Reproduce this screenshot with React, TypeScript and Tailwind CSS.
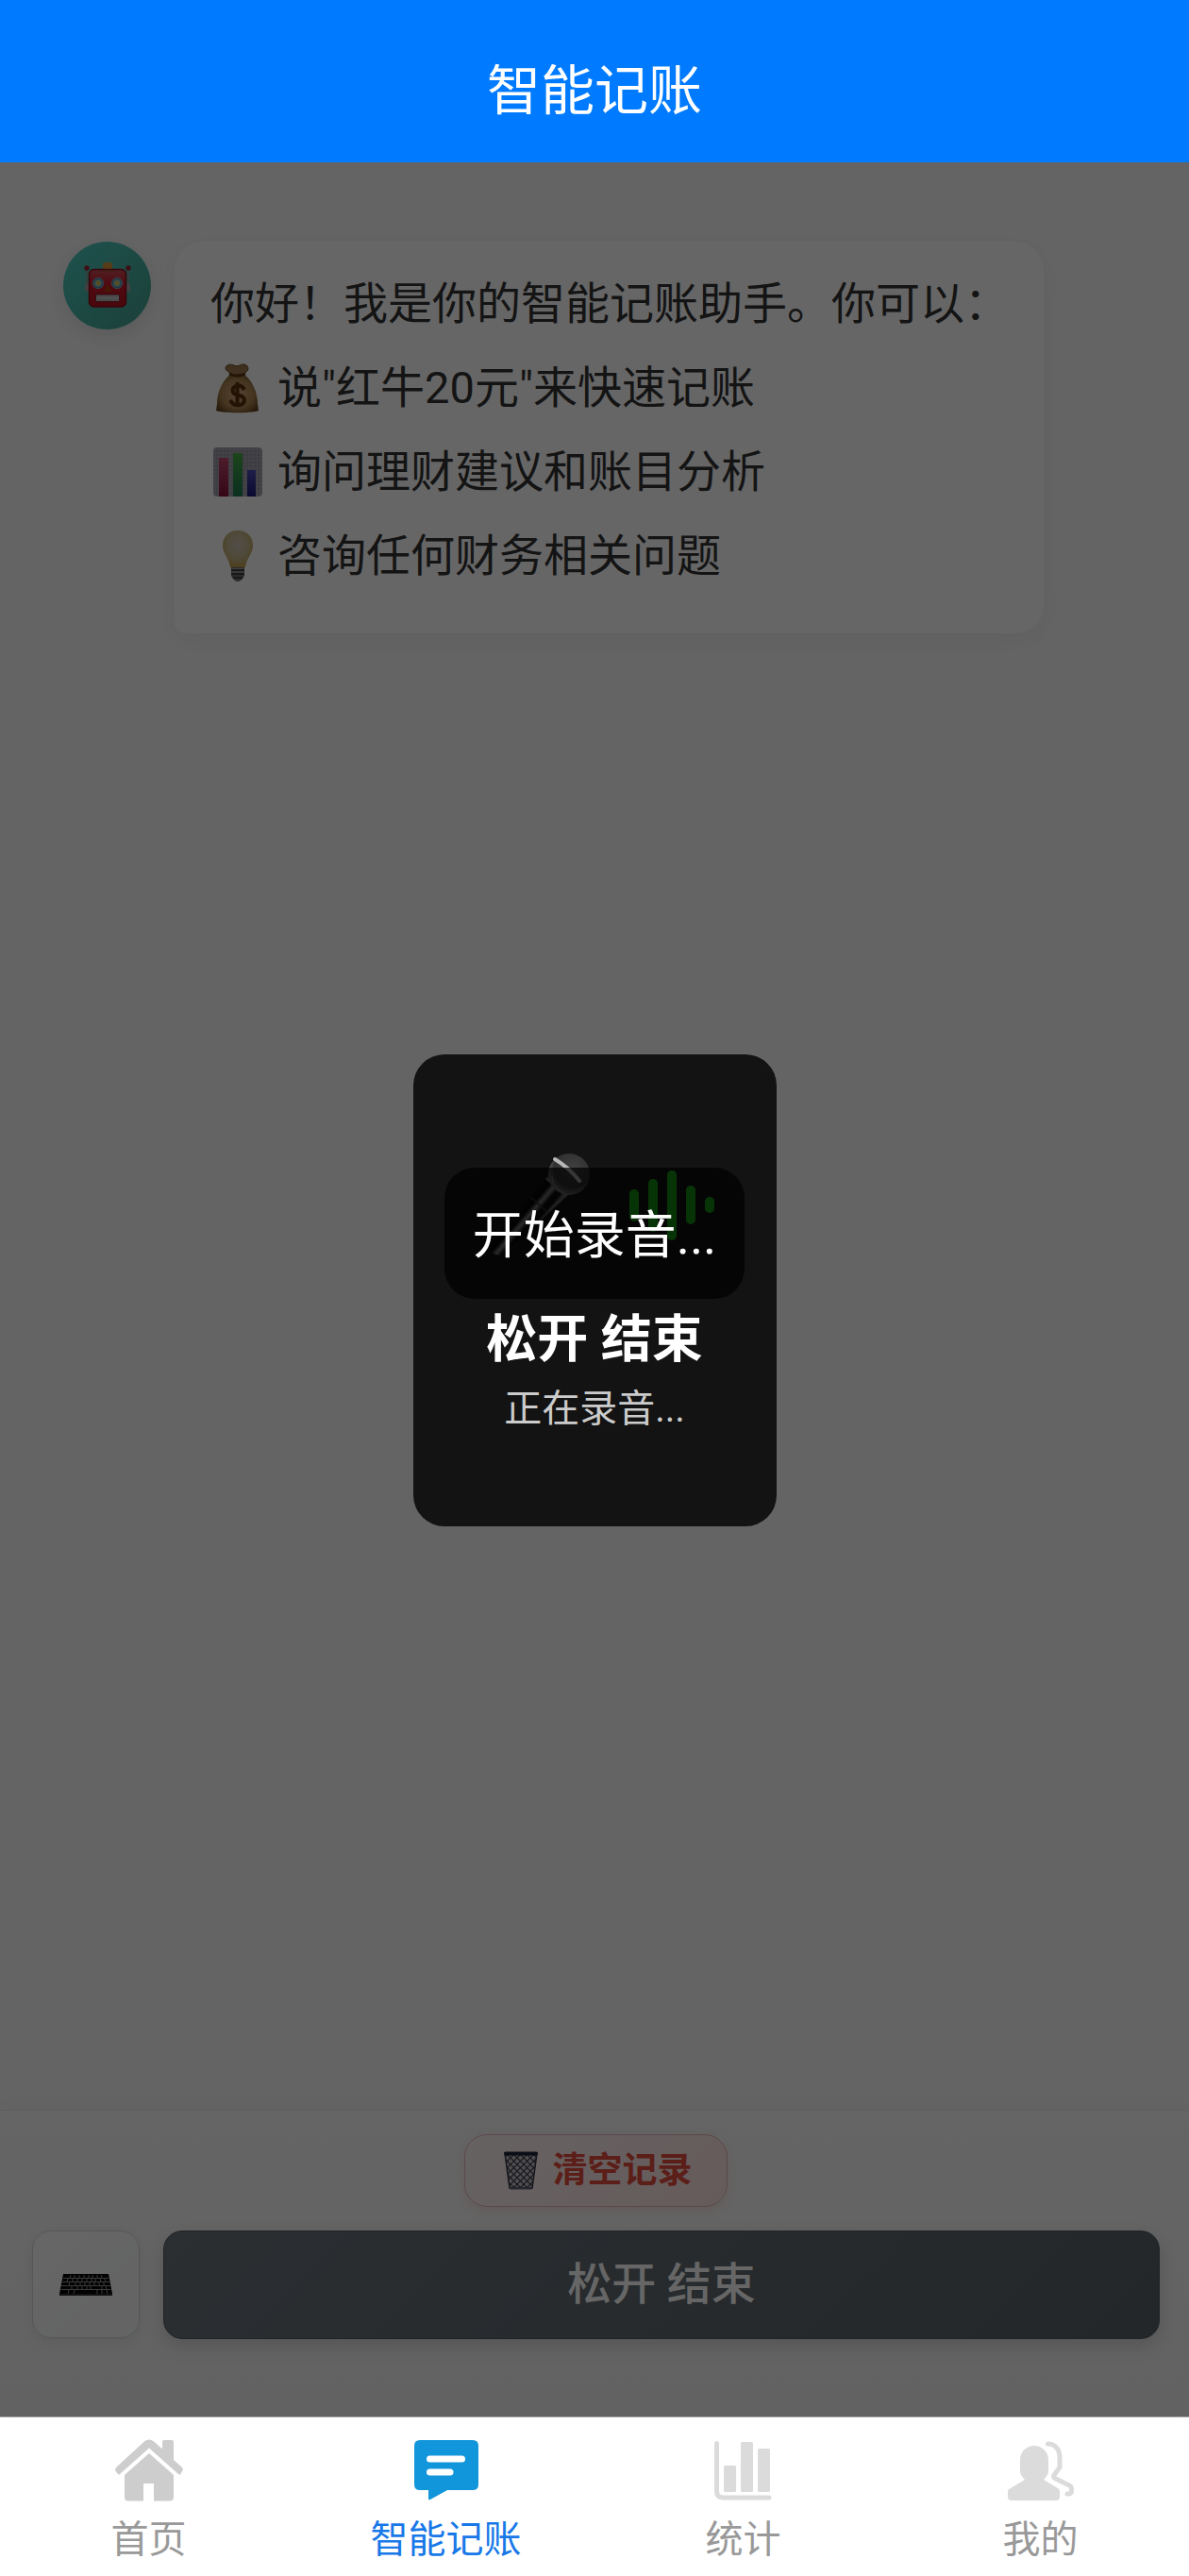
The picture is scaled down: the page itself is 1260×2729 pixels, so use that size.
import type { ReactNode } from "react";

function RobotIcon() {
  return (
    <svg viewBox="0 0 50 50" className="h-[50px] w-[50px]" aria-hidden="true">
      <defs>
        <linearGradient id="robot-face" x1="0" y1="0" x2="0" y2="1">
          <stop offset="0" stopColor="#c8525c" />
          <stop offset="0.35" stopColor="#c81c2c" />
          <stop offset="1" stopColor="#b81222" />
        </linearGradient>
      </defs>
      <path d="M3 7v16M47 7v16" stroke="#8a9a9a" strokeWidth="1.5" />
      <rect x="1" y="22" width="5" height="9" rx="2" fill="#a9a0a2" />
      <rect x="44" y="22" width="5" height="9" rx="2" fill="#a9a0a2" />
      <circle cx="3" cy="6" r="2.7" fill="#9c2432" />
      <circle cx="47" cy="6" r="2.7" fill="#9c2432" />
      <rect x="20" y="0" width="10" height="9" rx="2.5" fill="#d8983c" />
      <rect x="5.5" y="7.5" width="39" height="39.5" rx="5" fill="url(#robot-face)" stroke="#8d0c18" strokeWidth="1.5" />
      <path d="M15 9.500q10-4 20 0z" fill="#9c4a36" />
      {[15, 35].map((x) => (
        <g key={x}>
          <circle cx={x} cy="22" r="5.8" fill="#4389ac" stroke="#9a9cac" strokeWidth="1" />
          <circle cx={x} cy="22" r="3.8" fill="#9fc0b0" />
          <circle cx={x} cy="22" r="2.2" fill="#d8c44c" />
        </g>
      ))}
      <path d="M25 23l4.500 8h-9z" fill="#b33a12" />
      <rect x="12.5" y="34" width="25" height="7.5" rx="1" fill="#b8b8b8" stroke="#6b1620" strokeWidth="0.8" />
      <path d="M13 37.700h24" stroke="#d8d8d8" strokeWidth="1" />
    </svg>
  );
}

function MoneyBagIcon() {
  return (
    <svg viewBox="0 0 54 54" className="h-[54px] w-[54px]" aria-hidden="true">
      <defs>
        <radialGradient id="bag" cx="0.5" cy="0.5" r="0.6">
          <stop offset="0" stopColor="#d0a878" />
          <stop offset="0.65" stopColor="#a88250" />
          <stop offset="1" stopColor="#64441c" />
        </radialGradient>
      </defs>
      <path d="M14 6c1-5 6-4 9-3 2 1 4 1 6 0 4-2 9-1 9 4 0 2-4 4-5 7H20c-1-4-6-5-6-8z" fill="#9c774c" stroke="#6b4a20" strokeWidth="1" />
      <path d="M19 13h15C43 20 48 32 48 44l1 7c-6 3-39 3-45 0l1-7c0-12 5-24 14-31z" fill="url(#bag)" />
      <path d="M18 12q8 4 17 0" stroke="#58340d" strokeWidth="3" fill="none" />
      <path d="M34 29c-2-4-5-5-8-4-6 1-6 8 0 9l3 1c7 2 6 9 0 10-4 1-8-1-10-5M26.500 21v26" stroke="#58300c" strokeWidth="4" fill="none" />
    </svg>
  );
}

function BarChartIcon() {
  return (
    <svg viewBox="0 0 54 54" className="h-[54px] w-[54px]" aria-hidden="true">
      <rect x="1" y="1" width="52" height="52" rx="4" fill="#a8a8b6" />
      <path
        d="M5 1v52M9 1v52M13 1v52M17 1v52M21 1v52M25 1v52M29 1v52M33 1v52M37 1v52M41 1v52M45 1v52M49 1v52M1 5h52M1 9h52M1 13h52M1 17h52M1 21h52M1 25h52M1 29h52M1 33h52M1 37h52M1 41h52M1 45h52M1 49h52"
        stroke="#90909b"
        strokeWidth="0.8"
      />
      <linearGradient id="bar-r" x1="0" y1="0" x2="0" y2="1">
        <stop offset="0" stopColor="#c0486e" />
        <stop offset="1" stopColor="#841238" />
      </linearGradient>
      <linearGradient id="bar-g" x1="0" y1="0" x2="0" y2="1">
        <stop offset="0" stopColor="#46ac46" />
        <stop offset="1" stopColor="#1c7850" />
      </linearGradient>
      <linearGradient id="bar-b" x1="0" y1="0" x2="0" y2="1">
        <stop offset="0" stopColor="#4c4cb4" />
        <stop offset="1" stopColor="#161678" />
      </linearGradient>
      <rect x="7" y="12" width="10" height="41" fill="url(#bar-r)" />
      <rect x="22" y="7" width="10" height="46" fill="url(#bar-g)" />
      <rect x="37" y="25" width="9" height="28" fill="url(#bar-b)" />
    </svg>
  );
}

function BulbIcon() {
  return (
    <svg viewBox="0 0 54 54" className="h-[54px] w-[54px]" aria-hidden="true">
      <defs>
        <radialGradient id="bulb" cx="0.5" cy="0.4" r="0.6">
          <stop offset="0" stopColor="#ccc4b8" />
          <stop offset="0.6" stopColor="#c4b68c" />
          <stop offset="1" stopColor="#c4a04c" />
        </radialGradient>
      </defs>
      <path d="M27 0C17 0 11 7 11 16c0 9 7 13 8 23h16c1-10 8-14 8-23C43 7 37 0 27 0z" fill="url(#bulb)" />
      <path d="M20 39h14v9q-3 6-7 6t-7-6z" fill="#6c6c6c" />
      <path d="M20 42h14M20 46h14M22 50h10" stroke="#2f2f2f" strokeWidth="1.5" />
      <path d="M21 40.500h12M21 44h12" stroke="#aaa" strokeWidth="1" />
    </svg>
  );
}

function MicIcon() {
  return (
    <svg viewBox="-11 0 123 112" className="h-[112px] w-[123px]" aria-hidden="true">
      <defs>
        <linearGradient id="mic-body" gradientUnits="userSpaceOnUse" x1="32" y1="58" x2="54" y2="77">
          <stop offset="0" stopColor="#6a6a6a" />
          <stop offset="0.12" stopColor="#0c0c0c" />
          <stop offset="0.38" stopColor="#060606" />
          <stop offset="0.55" stopColor="#8c8c8c" />
          <stop offset="0.72" stopColor="#0c0c0c" />
          <stop offset="0.9" stopColor="#0c0c0c" />
          <stop offset="1" stopColor="#6a6a6a" />
        </linearGradient>
        <radialGradient id="mic-head" cx="0.6" cy="0.35" r="0.65">
          <stop offset="0" stopColor="#404040" />
          <stop offset="0.7" stopColor="#303030" />
          <stop offset="1" stopColor="#686868" />
        </radialGradient>
      </defs>
      <path d="M64 27L86 46L16 110Q5 108 1 97z" fill="url(#mic-body)" />
      <path d="M64 27L86 46" stroke="#6a6a6a" strokeWidth="3" />
      <path d="M47 47L66 64" stroke="#333" strokeWidth="1.5" />
      <circle cx="88" cy="23" r="22" fill="url(#mic-head)" />
      <path d="M70 25q0 13 16 20" stroke="#777" strokeWidth="1.5" fill="none" />
      <path d="M73 7Q88 16 99 30" stroke="#b8b8b8" strokeWidth="4" fill="none" strokeLinecap="round" />
    </svg>
  );
}

function TrashIcon() {
  return (
    <svg viewBox="0 0 36 41" className="h-[41px] w-9" aria-hidden="true">
      <defs>
        <pattern id="mesh" width="7" height="7" patternUnits="userSpaceOnUse">
          <path d="M0 0l7 7M7 0L0 7" stroke="#2c3040" strokeWidth="1.1" />
        </pattern>
      </defs>
      <path d="M1 2h34l-5 37H6z" fill="#c8c0c6" />
      <path d="M1 2h34l-5 37H6z" fill="url(#mesh)" stroke="#343846" strokeWidth="1.5" />
      <path d="M2 2.500h32" stroke="#20243a" strokeWidth="4" strokeLinecap="round" />
      <path d="M7 39.500h22" stroke="#626680" strokeWidth="2" strokeLinecap="round" />
    </svg>
  );
}

function KeyboardIcon() {
  return (
    <svg viewBox="0 0 56 23" className="h-[23px] w-14" aria-hidden="true">
      <path d="M4 0h48l4 21v2H0v-2z" fill="#060606" />
      <path
        d="M4 4.500h48M3 8.500h50M2 12.500h52M1.500 16.500h53M12 1l-1 3M16 1v3M21 1v3M26 1v3M31 1v3M35 1v3M40 1v3M44 1l1 3M9 5l-1 3M14 5v3M19 5v3M24 5v3M29 5v3M34 5v3M38 5v3M43 5l1 3M48 5l1 3M11 9l-1 3M17 9v3M22 9v3M27 9v3M32 9v3M37 9v3M42 9v3M47 9v3M13 13v3M19 13v3M24 13v3M29 13v3M33 13v3M45 13v3M49 13l1 3M10 17l-1 4M16 17l-1 4M40 17v4M45 17v4M50 17l1 4"
        stroke="#909090"
        strokeWidth="1"
        fill="none"
      />
      <path d="M0 22h56" stroke="#555" strokeWidth="1" />
    </svg>
  );
}

function HomeIcon() {
  return (
    <svg viewBox="0 0 72 66" className="h-[66px] w-[72px] fill-[#cdcdcd]" aria-hidden="true">
      <path d="M31.500 2Q36 -1 40.500 2L50 10.500V3q0-2 2-2h8q2 0 2 2v19l9.500 8.500Q72 32 71.500 33l-2 4Q68.500 38 67 37L36 9.500L5 37Q4 38 3 37L0.500 34Q-0.500 32 1 30z" />
      <path d="M36 15L62 38v23.500q0 4-4 4H41V47H30v18.500H14q-4 0-4-4V38z" />
    </svg>
  );
}

function ChatIcon() {
  return (
    <svg viewBox="0 0 68 64" className="h-16 w-[68px]" aria-hidden="true">
      <path d="M6 0h56q6 0 6 6v41q0 6-6 6H35L17 63q-2 1-2-1v-9H6q-6 0-6-6V6q0-6 6-6z" fill="#1296db" />
      <path d="M16.500 20h34M16.500 34h21.500" stroke="white" strokeWidth="7" strokeLinecap="round" />
    </svg>
  );
}

function StatsIcon() {
  return (
    <svg viewBox="0 0 61 63" className="h-[63px] w-[61px] fill-[#dbdbdb]" aria-hidden="true">
      <path d="M2.500 2.500V53q0 7 7 7H58" fill="none" stroke="#dbdbdb" strokeWidth="5" strokeLinecap="round" />
      <rect x="10" y="26" width="13" height="28" rx="1.5" />
      <rect x="28" y="1" width="13" height="53" rx="1.5" />
      <rect x="46" y="8" width="13" height="46" rx="1.5" />
    </svg>
  );
}

function PeopleIcon() {
  return (
    <svg viewBox="0 0 70 63" className="h-[63px] w-[70px]" aria-hidden="true">
      <path d="M28 5C37 5 43 12 43 20V32Q43 36 38 41L53 50Q55 51 55 53V59Q55 63 51 63H4Q0 63 0 59V53Q0 51 3 50L18 41Q13 36 13 32V20C13 12 19 5 28 5z" fill="#dbdbdb" />
      <path d="M42.500 3C50 3 55 9 55 17V28L49 36Q48 38.500 50 39.500L65 47Q67.500 48 67.500 51V53Q67.500 56.500 63 56" fill="none" stroke="#dbdbdb" strokeWidth="5" strokeLinecap="round" />
    </svg>
  );
}

function Tip({ icon, children }: { icon: ReactNode; children: ReactNode }) {
  return (
    <li className="flex items-center gap-[13px]">
      <span className="flex w-[58px] justify-center">{icon}</span>
      <span>{children}</span>
    </li>
  );
}

function Tab({ icon, label, active = false }: { icon: ReactNode; label: string; active?: boolean }) {
  return (
    <a
      href="#"
      aria-current={active ? "page" : undefined}
      className={`flex flex-1 flex-col items-center pt-5 text-[40px] leading-[60px] ${active ? "text-[#1878e8]" : "text-[#999999]"}`}
    >
      <span className="flex h-[72px] items-center">{icon}</span>
      <span className="mt-2">{label}</span>
    </a>
  );
}

const bars = ["h-[34px]", "h-14", "h-[74px]", "h-[41px]", "h-[17px]"];

export default function App() {
  return (
    <div className="flex min-h-screen flex-col bg-[#fafafa] font-[Roboto,'Noto_Sans_CJK_SC',sans-serif]">
      <header className="flex h-[172px] items-end justify-center bg-[#007aff] pb-[31px]">
        <h1 className="text-[57px] leading-[88px] text-white">智能记账</h1>
      </header>

      <main className="relative flex flex-1 flex-col">
        <section className="flex flex-1 items-start gap-[25px] px-[67px] pt-[84px]">
          <div className="flex h-[93px] w-[93px] shrink-0 items-center justify-center rounded-full bg-linear-135 from-[#4ecdc4] to-[#44a08d] shadow-[0_7px_20px_rgba(0,0,0,0.1)]">
            <RobotIcon />
          </div>
          <div className="w-[921px] rounded-[30px] rounded-bl-[10px] bg-white pt-[21px] pr-6 pb-[38px] pl-[38px] text-[47px] leading-[89px] text-[#333333] shadow-[0_7px_26px_rgba(0,0,0,0.05)]">
            <p>你好！我是你的智能记账助手。你可以：</p>
            <ul>
              <Tip icon={<MoneyBagIcon />}>说"红牛20元"来快速记账</Tip>
              <Tip icon={<BarChartIcon />}>询问理财建议和账目分析</Tip>
              <Tip icon={<BulbIcon />}>咨询任何财务相关问题</Tip>
            </ul>
          </div>
        </section>

        <section className="border-t border-[#e9ecef] bg-linear-to-b from-[#fcfcfc] to-[#f6f6f6] pr-[31px] pb-[82px] pl-[34px] shadow-[0_-7px_26px_rgba(0,0,0,0.03)]">
          <div className="flex justify-center pt-[25px]">
            <button
              type="button"
              className="flex h-[77px] w-[279px] items-center justify-center gap-4 rounded-3xl border border-[#e4b4b8] bg-linear-135 from-[#fff5f5] to-[#ffe3e3] pl-1 text-[37px] font-bold text-[#e74c3c] shadow-[0_4px_14px_rgba(231,76,60,0.15)]"
            >
              <TrashIcon />
              清空记录
            </button>
          </div>
          <div className="mt-[25px] flex gap-[25px]">
            <button
              type="button"
              aria-label="键盘输入"
              className="flex h-[114px] w-[114px] shrink-0 items-center justify-center rounded-[20px] border border-[#d5d8da] bg-linear-135 from-white to-[#f8f9fa] shadow-[0_4px_14px_rgba(0,0,0,0.08)]"
            >
              <KeyboardIcon />
            </button>
            <button
              type="button"
              className="h-[115px] flex-1 rounded-[20px] border border-[#51585e] bg-linear-135 from-[#6c757d] to-[#5a6268] text-[47px] font-medium text-white shadow-[0_7px_20px_rgba(0,0,0,0.15)]"
            >
              松开 结束
            </button>
          </div>
        </section>

        <div className="absolute inset-0 bg-black/60" />
      </main>

      <nav className="flex h-[169px] border-t border-[#a5a5a5] bg-white">
        <Tab icon={<HomeIcon />} label="首页" />
        <Tab icon={<ChatIcon />} label="智能记账" active />
        <Tab icon={<StatsIcon />} label="统计" />
        <Tab icon={<PeopleIcon />} label="我的" />
      </nav>

      <div className="pointer-events-none fixed inset-0 flex items-center justify-center pt-1">
        <div role="dialog" aria-label="录音" className="flex h-[500px] w-[385px] flex-col items-center rounded-[33px] bg-[#131313] pt-[104px] text-white">
          <div className="flex items-center gap-10">
            <MicIcon />
            <div className="flex items-center gap-[10px]">
              {bars.map((h) => (
                <span key={h} className={`w-[10px] rounded-[5px] bg-[#1aad19] ${h}`} />
              ))}
            </div>
          </div>
          <p className="mt-[47px] text-[54px] leading-[80px] font-bold">松开 结束</p>
          <p className="text-[40px] leading-[66px] text-[#cccccc]">正在录音...</p>
        </div>
      </div>

      <div className="pointer-events-none fixed inset-0 flex items-center justify-center pb-[116px]">
        <p role="status" className="flex h-[139px] items-center rounded-[32px] bg-black/70 px-[30px] pt-1.5 text-[54px] text-white">开始录音...</p>
      </div>
    </div>
  );
}
